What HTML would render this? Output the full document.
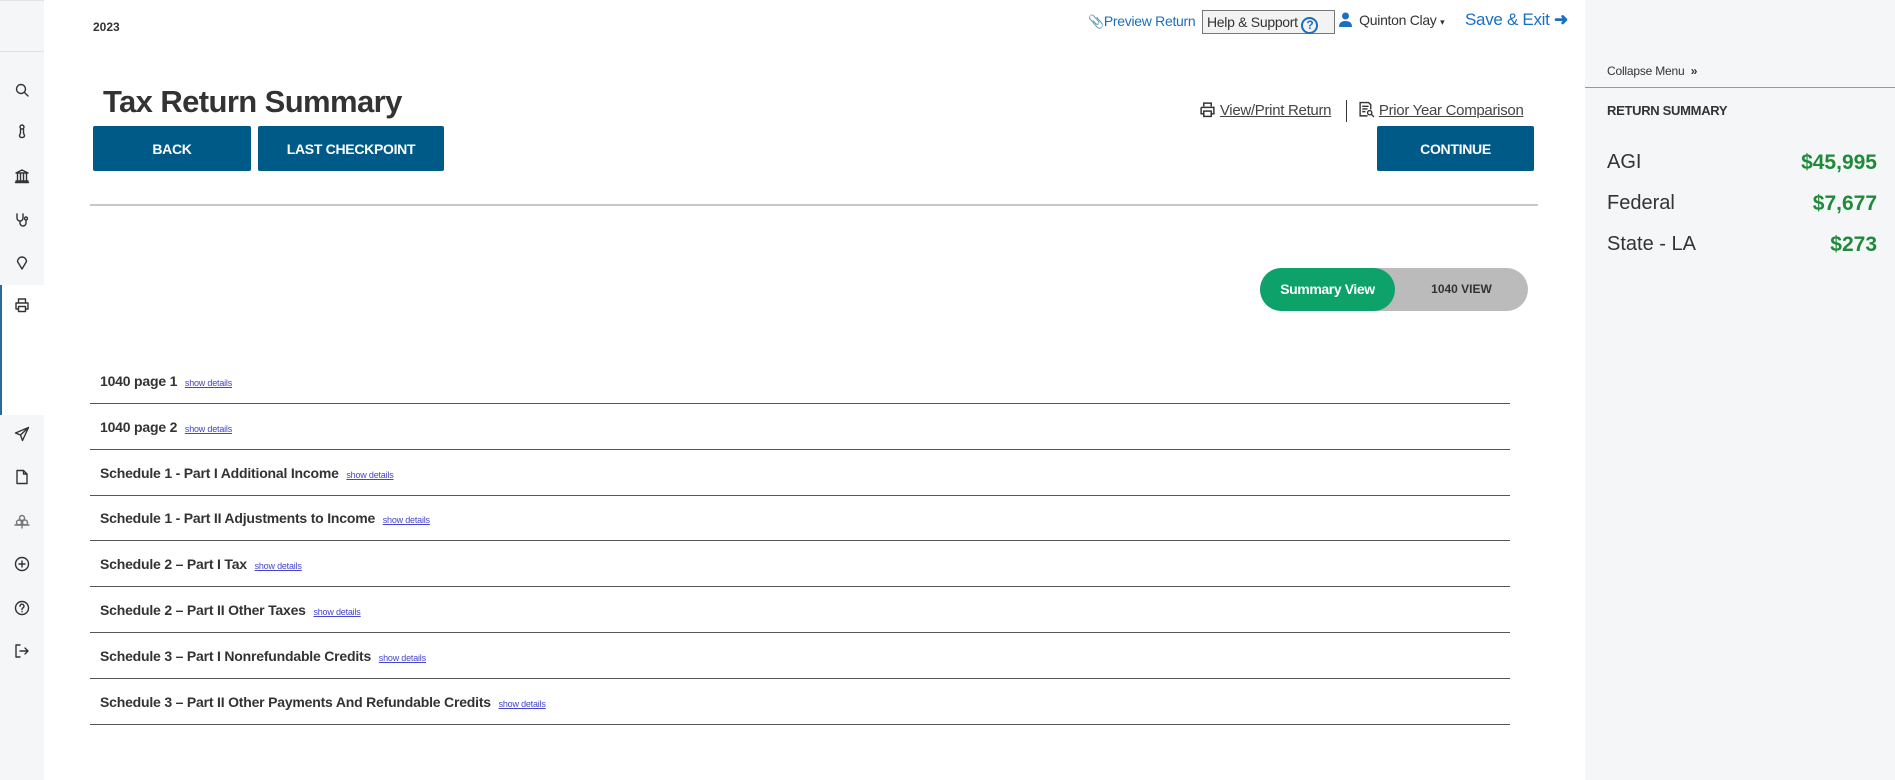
<!DOCTYPE html>
<html><head><meta charset="utf-8"><style>
*{margin:0;padding:0;box-sizing:border-box}
body{width:1895px;height:780px;position:relative;overflow:hidden;background:#fff;font-family:"Liberation Sans",Arial,sans-serif;color:#333}
.abs{position:absolute}
.side{left:0;top:0;width:44px;height:780px;background:#f5f6f8;border-top:1px solid #e2e4e8}
.side .sep{position:absolute;left:0;top:50px;width:44px;height:1px;background:#dfe1e4}
.active{left:0;top:285px;width:44px;height:130px;background:#fff;border-left:2px solid #2c6a9a}
.ic{position:absolute;left:14px;width:16px;height:16px}
.ic svg{width:16px;height:16px;fill:none;stroke:#333;stroke-width:1.4;stroke-linecap:round;stroke-linejoin:round}
.btn{position:absolute;top:126px;height:45px;background:#005a88;color:#fff;font-weight:bold;font-size:14px;display:flex;align-items:center;justify-content:center;border-radius:2px;letter-spacing:-0.3px}
.row{position:absolute;left:90px;width:1420px;height:46px;border-bottom:1.5px solid #555}
.row span.t{position:absolute;left:10px;top:15px;font-size:14px;font-weight:bold;color:#333;letter-spacing:-0.2px}
.row a{font-size:9px;color:#44c;text-decoration:underline;font-weight:normal;margin-left:4px}
.right{left:1585px;top:0;width:310px;height:780px;background:#f5f6f8}
.sv{font-size:20px;position:absolute;left:22px;color:#333}
.vv{font-size:21px;position:absolute;right:18px;color:#1e8a3a;font-weight:bold}
</style></head><body>
<div class="abs side"><div class="sep"></div></div>
<div class="abs active"></div>
<div class="ic" style="top:82px"><svg viewBox="0 0 16 16"><circle cx="7" cy="7" r="4.5"/><path d="M10.5 10.5L14 14"/></svg></div>
<div class="ic" style="top:123px"><svg viewBox="0 0 16 16"><circle cx="8" cy="4" r="2"/><path d="M6.5 6.5v3.5l-1 2.5q0 2 2.5 2t2.5-2l-1-2.5V6.5"/></svg></div>
<div class="ic" style="top:168px"><svg viewBox="0 0 16 16"><path d="M2 5L8 2l6 3H2zM3.5 6v6M6.5 6v6M9.5 6v6M12.5 6v6M2 13h12M1.5 14.5h13"/></svg></div>
<div class="ic" style="top:212px"><svg viewBox="0 0 16 16"><path d="M3 2v4a3 3 0 0 0 6 0V2M6 9v2a3 3 0 0 0 6 0V8"/><circle cx="12" cy="6.5" r="1.5"/></svg></div>
<div class="ic" style="top:254px"><svg viewBox="0 0 16 16"><path d="M8 15L3.5 7.5a4.5 4.5 0 1 1 9 0z"/></svg></div>
<div class="ic" style="top:297px"><svg viewBox="0 0 16 16"><path d="M4.5 5V2h7v3M2 6h12v6h-2.5M4.5 12H2V6"/><rect x="4.5" y="9.5" width="7" height="5"/></svg></div>
<div class="ic" style="top:426px"><svg viewBox="0 0 16 16"><path d="M14.5 1.5L1.5 7l5 2 2 5.5zM6.5 9L14.5 1.5"/></svg></div>
<div class="ic" style="top:469px"><svg viewBox="0 0 16 16"><path d="M3 1.5h6.5l3.5 3.5v9.5H3zM9.5 1.5V5H13"/></svg></div>
<div class="ic" style="top:513px"><svg viewBox="0 0 16 16" style="stroke:#777"><circle cx="8" cy="5" r="2.5"/><circle cx="5" cy="9.5" r="2.5"/><circle cx="11" cy="9.5" r="2.5"/><path d="M8 7.5V15M1 12h14"/></svg></div>
<div class="ic" style="top:556px"><svg viewBox="0 0 16 16"><circle cx="8" cy="8" r="6.5"/><path d="M8 5v6M5 8h6"/></svg></div>
<div class="ic" style="top:600px"><svg viewBox="0 0 16 16"><circle cx="8" cy="8" r="6.5"/><path d="M6 6.3a2 2 0 1 1 2.5 1.8c-.5.2-.5.6-.5 1.4M8 11.5v.2"/></svg></div>
<div class="ic" style="top:643px"><svg viewBox="0 0 16 16"><path d="M6 2H2v12h4M6 8h8M11 5l3 3-3 3"/></svg></div>

<div class="abs" style="left:93px;top:20px;font-size:12px;font-weight:bold">2023</div>
<div class="abs" style="left:1088px;top:13px;font-size:14px;color:#1a6fc2;letter-spacing:-0.3px"><span style="font-size:13px">&#128206;</span>Preview Return</div>
<div class="abs" style="left:1202px;top:10px;width:133px;height:24px;border:1px solid #777;background:#f3f3f3;font-size:14px;padding:3px 0 0 4px;letter-spacing:-0.3px">Help &amp; Support <span style="display:inline-block;width:17px;height:17px;border:2px solid #1a6fc2;border-radius:50%;color:#1a6fc2;font-size:12px;text-align:center;line-height:13px;font-weight:bold;vertical-align:-2px">?</span></div>
<div class="abs" style="left:1339px;top:12px;font-size:14px;letter-spacing:-0.3px"><svg width="13" height="15" viewBox="0 0 13 15" style="vertical-align:-2px"><circle cx="6.5" cy="4" r="3.5" fill="#1a6fc2"/><path d="M0 15q0-6 6.5-6T13 15z" fill="#1a6fc2"/></svg>&nbsp; Quinton Clay <span style="font-size:9px">&#9662;</span></div>
<div class="abs" style="left:1465px;top:10px;font-size:17px;color:#1a6fc2;letter-spacing:-0.3px">Save &amp; Exit <b>&#10140;</b></div>

<div class="abs" style="left:103px;top:84px;font-size:31px;font-weight:bold;color:#333;letter-spacing:-0.6px">Tax Return Summary</div>
<div class="btn" style="left:93px;width:158px">BACK</div>
<div class="btn" style="left:258px;width:186px">LAST CHECKPOINT</div>
<div class="btn" style="left:1377px;width:157px">CONTINUE</div>
<div class="abs" style="left:1199px;top:101px;font-size:15px;color:#444;letter-spacing:-0.3px"><svg width="17" height="17" viewBox="0 0 16 16" style="vertical-align:-3px;fill:none;stroke:#333;stroke-width:1.4"><path d="M4.5 5V2h7v3M2 6h12v6h-2.5M4.5 12H2V6"/><rect x="4.5" y="9.5" width="7" height="5"/></svg> <u>View/Print Return</u></div>
<div class="abs" style="left:1346px;top:100px;width:1px;height:22px;background:#333"></div>
<div class="abs" style="left:1358px;top:101px;font-size:15px;color:#444;letter-spacing:-0.3px"><svg width="17" height="17" viewBox="0 0 16 16" style="vertical-align:-3px;fill:none;stroke:#333;stroke-width:1.3"><path d="M9 14H2V1.5h8l2 2V8M4 5h6M4 7.5h5M4 10h3"/><circle cx="11" cy="11" r="2"/><path d="M12.5 12.5L15 15"/></svg> <u>Prior Year Comparison</u></div>
<div class="abs" style="left:90px;top:204px;width:1448px;height:2px;background:#c8c8c8"></div>

<div class="abs" style="left:1260px;top:268px;width:268px;height:43px;border-radius:22px;background:#bbb"></div>
<div class="abs" style="left:1260px;top:268px;width:135px;height:43px;border-radius:22px;background:#0ea26b;color:#fff;font-weight:bold;font-size:14px;text-align:center;line-height:43px;letter-spacing:-0.4px">Summary View</div>
<div class="abs" style="left:1395px;top:268px;width:133px;height:43px;color:#333;font-weight:bold;font-size:12px;text-align:center;line-height:43px">1040 VIEW</div>

<div class="row" style="top:358px"><span class="t">1040 page 1 <a>show details</a></span></div>
<div class="row" style="top:404px"><span class="t">1040 page 2 <a>show details</a></span></div>
<div class="row" style="top:450px"><span class="t">Schedule 1 - Part I Additional Income <a>show details</a></span></div>
<div class="row" style="top:495px"><span class="t">Schedule 1 - Part II Adjustments to Income <a>show details</a></span></div>
<div class="row" style="top:541px"><span class="t">Schedule 2 – Part I Tax <a>show details</a></span></div>
<div class="row" style="top:587px"><span class="t">Schedule 2 – Part II Other Taxes <a>show details</a></span></div>
<div class="row" style="top:633px"><span class="t">Schedule 3 – Part I Nonrefundable Credits <a>show details</a></span></div>
<div class="row" style="top:679px"><span class="t">Schedule 3 – Part II Other Payments And Refundable Credits <a>show details</a></span></div>

<div class="abs right">
 <div class="abs" style="left:22px;top:64px;font-size:12px;color:#333;letter-spacing:-0.2px">Collapse Menu &nbsp;<b>&#187;</b></div>
 <div class="abs" style="left:0;top:87px;width:310px;height:1px;background:#999"></div>
 <div class="abs" style="left:22px;top:103px;font-size:13px;font-weight:bold;letter-spacing:-0.3px">RETURN SUMMARY</div>
 <div class="sv" style="top:151px">AGI</div><div class="vv" style="top:151px">$45,995</div>
 <div class="sv" style="top:192px">Federal</div><div class="vv" style="top:192px">$7,677</div>
 <div class="sv" style="top:233px">State - LA</div><div class="vv" style="top:233px">$273</div>
</div>
</body></html>
